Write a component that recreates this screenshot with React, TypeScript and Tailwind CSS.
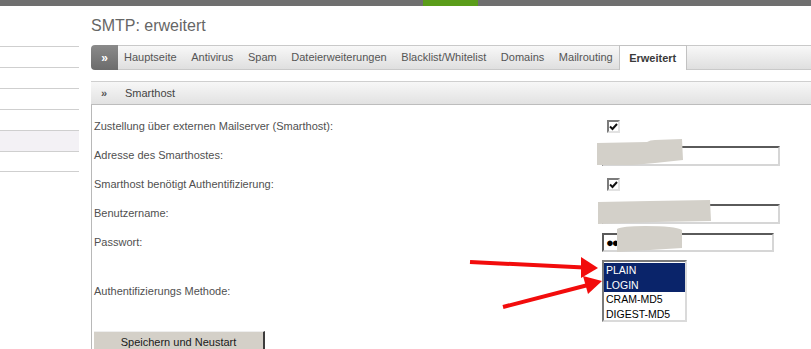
import React from "react";

const tabs = [
  "Hauptseite",
  "Antivirus",
  "Spam",
  "Dateierweiterungen",
  "Blacklist/Whitelist",
  "Domains",
  "Mailrouting",
];

const methods = [
  { label: "PLAIN", selected: true },
  { label: "LOGIN", selected: true },
  { label: "CRAM-MD5", selected: false },
  { label: "DIGEST-MD5", selected: false },
];

function Checkbox() {
  return (
    <div className="ml-[5px] flex h-[13px] w-[13px] items-center justify-center border-2 border-t-[#7b7b7b] border-l-[#7b7b7b] border-b-[#e2e2e2] border-r-[#e2e2e2] bg-white">
      <svg width="9" height="8" viewBox="0 0 9 8">
        <path d="M1 3.5 L3.5 6 L8 1" fill="none" stroke="#111" strokeWidth="2" />
      </svg>
    </div>
  );
}

function TextInput({ wide = true, password = false }: { wide?: boolean; password?: boolean }) {
  return (
    <div
      className={`flex items-center border-2 border-t-[#5a5a5a] border-l-[#5a5a5a] border-b-[#d6d6d6] border-r-[#d6d6d6] bg-white pl-[2px] ${
        wide ? "h-[20px] w-[178px]" : "h-[19px] w-[172px]"
      }`}
    >
      {password && <span className="text-[13px] leading-none tracking-[-2px] text-black">●●</span>}
    </div>
  );
}

function Row({ label, children }: { label: string; children?: React.ReactNode }) {
  return (
    <div className="flex h-[29px] items-center">
      <div className="w-[510px] pl-[2px] text-[11px] text-[#505050]">{label}</div>
      {children}
    </div>
  );
}

export default function App() {
  return (
    <div className="relative h-[349px] w-[811px] overflow-hidden bg-white font-['Liberation_Sans',Arial,sans-serif]">
      {/* top strip */}
      <div className="flex h-[6px] bg-[#6f6f6f]">
        <div className="w-[423px]" />
        <div className="w-[55px] bg-[#5b9d1a]" />
      </div>

      <div className="flex">
        {/* left navigation */}
        <aside className="mt-[40px] w-[79px]">
          {[0, 1, 2, 3, 4, 5].map((i) => (
            <div
              key={i}
              className={`h-[21px] border-t border-[#cfcfcf] ${i === 4 ? "bg-[#f3f1f5]" : ""} ${
                i === 5 ? "border-b" : ""
              }`}
            />
          ))}
        </aside>

        <main className="ml-[12px] flex-1">
          <h1 className="mt-[10px] h-[20px] text-[16px] leading-[20px] text-[#666]">SMTP: erweitert</h1>

          {/* tab bar */}
          <div className="mt-[9px] flex h-[25px] items-stretch">
            <div className="flex w-[27px] items-center justify-center rounded-l-[4px] bg-gradient-to-b from-[#8a8a8a] to-[#6c6c6c] text-[12px] font-bold text-white">
              »
            </div>
            <div className="flex flex-1 items-stretch border-y border-[#c9c9c9] bg-gradient-to-b from-[#f8f8f8] to-[#dfdfdf]">
              <div className="flex items-center gap-[14.6px] pl-[6px] text-[11px] text-[#555]">
                {tabs.map((t) => (
                  <span key={t}>{t}</span>
                ))}
              </div>
              <div className="relative z-10 -mt-px mb-[-1px] ml-[6px] flex w-[68px] items-center justify-center border-x border-t border-[#c2c2c2] bg-white text-[11px] font-bold text-[#3a3a3a]">
                Erweitert
              </div>
            </div>
          </div>

          {/* section header */}
          <div className="mt-[11px] flex h-[24px] items-center border-y border-t-[#cfcfcf] border-b-[#bdbdbd] bg-gradient-to-b from-[#f7f7f7] to-[#e2e2e2] text-[11px] text-[#444]">
            <span className="ml-[10px] w-[24px] text-[11px] font-bold text-[#555]">»</span>
            <span>Smarthost</span>
          </div>

          {/* form */}
          <div className="border-l border-[#b8b8b8] pt-[7px]">
            <Row label="Zustellung über externen Mailserver (Smarthost):">
              <Checkbox />
            </Row>
            <Row label="Adresse des Smarthostes:">
              <TextInput />
            </Row>
            <Row label="Smarthost benötigt Authentifizierung:">
              <Checkbox />
            </Row>
            <Row label="Benutzername:">
              <TextInput />
            </Row>
            <Row label="Passwort:">
              <TextInput wide={false} password />
            </Row>

            <div className="mt-[3px] flex items-center">
              <div className="w-[510px] pl-[2px] text-[11px] text-[#505050]">Authentifizierungs Methode:</div>
              <div className="h-[62px] w-[85px] border-2 border-t-[#7a7a7a] border-l-[#7a7a7a] border-b-[#dadada] border-r-[#dadada] bg-white pt-px">
                {methods.map((m) => (
                  <div
                    key={m.label}
                    className={`h-[14.5px] pl-[2px] text-[10.5px] leading-[14.5px] ${
                      m.selected ? "bg-[#0a246a] text-white" : "text-black"
                    }`}
                  >
                    {m.label}
                  </div>
                ))}
              </div>
            </div>

            <div className="ml-[2px] mt-[9px] flex h-[22px] w-[171px] items-center justify-center border-r-2 border-t border-r-[#3c3c3c] border-t-[#eeeeee] bg-[#d4d0c8] text-[11px] text-[#1a1a1a]">
              Speichern und Neustart
            </div>
          </div>
        </main>
      </div>

      {/* redaction smears and red arrows drawn on the screenshot */}
      <svg className="pointer-events-none absolute inset-0" width="811" height="349" viewBox="0 0 811 349">
        <path
          d="M597 143 L647 142 Q650 140 655 140 L682 139 L683 160 L655 163 L633 165 L597 165 Z"
          fill="#d3d0c9"
        />
        <path d="M598 202 L650 201 L710 200 L711 221 L655 222 L598 224 Z" fill="#d3d0c9" />
        <path d="M617 229 Q622 226 645 226 Q675 226 682 230 L682 248 L650 250 L617 252 Z" fill="#d3d0c9" />

        <line x1="470" y1="262" x2="584" y2="267.5" stroke="#f20c0c" strokeWidth="4" />
        <polygon points="598,268 581,257 581,278" fill="#f20c0c" />
        <line x1="503" y1="307" x2="588" y2="285" stroke="#f20c0c" strokeWidth="4" />
        <polygon points="602,281 583,276 588,294" fill="#f20c0c" />
      </svg>
    </div>
  );
}
